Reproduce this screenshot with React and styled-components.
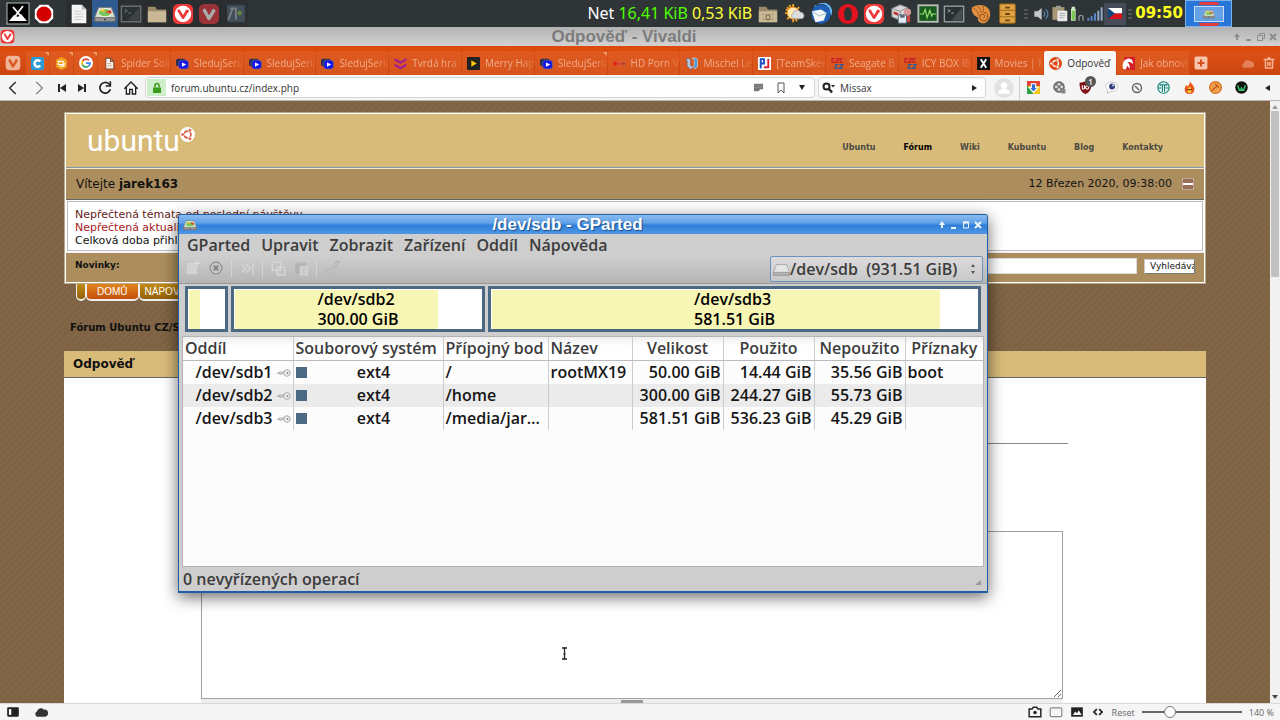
import React from "react";
import styled, { createGlobalStyle, css } from "styled-components";

const ui = `"Open Sans", "Noto Sans", sans-serif`;
const web = `"DejaVu Sans", Verdana, sans-serif`;
const title = `"Liberation Sans", Arial, sans-serif`;

const GlobalStyle = createGlobalStyle`
  *, *::before, *::after { box-sizing: border-box; }
  body { margin: 0; font-family: ${ui}; color: #111; overflow: hidden; }
  button, input, select, textarea { font: inherit; color: inherit; margin: 0; }
  button { border: 0; padding: 0; background: none; }
  a { color: inherit; text-decoration: none; }
  svg { display: block; flex: none; }
`;

/* ---------- icons ---------- */

const Svg = ({ s = 24, w, h, vb = "0 0 24 24", children, ...rest }) => (
  <svg width={w || s} height={h || s} viewBox={vb} fill="none" aria-hidden="true" {...rest}>
    {children}
  </svg>
);

const XIcon = () => (
  <Svg>
    <rect x="1" y="1" width="22" height="21" fill="#000" stroke="#bbb" />
    <path d="M7 5l11 13M17 4L7 17" stroke="#fff" strokeWidth="1.800" />
    <path d="M3 19l5-6 4 2 3-3 6 7z" fill="#fff" />
  </Svg>
);
const StopIcon = () => (
  <Svg s={20}>
    <path d="M7 1h10l6 6v10l-6 6H7l-6-6V7z" fill="#fff" />
    <circle cx="12" cy="12" r="9" fill="#d40000" />
  </Svg>
);
const DocIcon = ({ s = 22 }) => (
  <Svg s={s}>
    <path d="M4 2h11l5 5v15H4z" fill="#f4f4f4" />
    <path d="M15 2l5 5h-5z" fill="#bbb" />
    <path d="M7 9h8M7 12h10M7 15h10M7 18h8" stroke="#ccc" />
  </Svg>
);
const DiskIcon = ({ s = 22, plain }) => (
  <Svg s={s}>
    <path d="M5 5h14l4 10v5H1v-5z" fill={plain ? "#e4e4e4" : "#d8dcd2"} stroke={plain ? "#999" : "#777"} />
    <path d="M1 16h22v4H1z" fill={plain ? "#b5b5b5" : "#999"} stroke={plain ? "#8c8c8c" : "#666"} />
    {!plain && (
      <>
        <ellipse cx="12" cy="10.500" rx="7.500" ry="4.500" fill="#7bc85a" stroke="#fff" />
        <path d="M12 10l6-2.500a8 5 0 0 1 1 4z" fill="#e33" />
        <path d="M12 10l-6-2a8 4 0 0 1 5-2z" fill="#f2c94c" />
        <circle cx="12" cy="18" r="1" fill="#333" />
      </>
    )}
  </Svg>
);
const TermIcon = () => (
  <Svg s={22}>
    <rect x="1.500" y="3.500" width="21" height="17" fill="#2b3033" stroke="#979d9f" strokeWidth="1.500" />
    <path d="M5 7l3 1.500L5 10M9 11h3" stroke="#a9b0b2" />
    <path d="M21 5L9 19h12z" fill="#474e51" />
  </Svg>
);
const FolderIcon = ({ dots }) => (
  <Svg s={22}>
    <path d="M2 4h8l2 3h10v14H2z" fill="#9c8a6c" />
    <path d="M2 9h20v12H2z" fill="#c9b795" />
    {dots && <path d="M7 12v1m0 4v1m10-6v1m0 4v1M10 13v5h4v-5z" stroke="#6a5a40" />}
  </Svg>
);
const VivaldiIcon = ({ s = 22, bg = "#ef3939", fg = "#fff", v = "#ef3939" }) => (
  <Svg s={s}>
    <rect x="1" y="1" width="22" height="22" rx="6" fill={bg} />
    <circle cx="12" cy="12" r="9" fill={fg} />
    <path d="M7.500 8.500L12 16l4-6.500" stroke={v} strokeWidth="3" strokeLinecap="round" strokeLinejoin="round" />
    <circle cx="16.500" cy="9" r="1.800" fill={v} />
  </Svg>
);
const VMark = ({ s, bg, v }) => (
  <Svg s={s}>
    <rect x="1" y="1" width="22" height="22" rx="6" fill={bg} />
    <path d="M7 8l5 9 4.500-7.500" stroke={v} strokeWidth="3.600" strokeLinecap="round" strokeLinejoin="round" />
    <circle cx="17" cy="8.500" r="2" fill={v} />
  </Svg>
);
const ToolsIcon = () => (
  <Svg s={22}>
    <rect x="3" y="2" width="20" height="19" fill="#4f6170" stroke="#33383b" />
    <path d="M2 4v18" stroke="#222" strokeWidth="2" />
    <path d="M5 18l4-11M13 18V7M7 6h7" stroke="#a9b0b2" strokeWidth="2" />
    <circle cx="17" cy="11" r="2.500" fill="#84c042" />
  </Svg>
);
const WeatherIcon = () => (
  <Svg s={22}>
    <g stroke="#f4a320" strokeWidth="2">
      <path d="M10 1v20M1 11h18M3.500 4.500l13 13M16.500 4.500l-13 13M6 2l8 18M2 7l16 8" />
    </g>
    <circle cx="10" cy="11" r="6.500" fill="#ffe9b0" stroke="#f09418" />
    <path d="M10 17a3.500 3.500 0 0 1 0-6 4.500 4.500 0 0 1 8-1 3.800 3.800 0 0 1 2 7z" fill="#dedede" stroke="#aaa" />
  </Svg>
);
const BirdIcon = () => (
  <Svg s={22}>
    <circle cx="12" cy="12" r="10.500" fill="#1f5fb8" />
    <path d="M5 3a11 11 0 0 1 16 3l2 8a9 9 0 0 0-18-9z" fill="#63b4f5" />
    <path d="M2 9l10-2 6 4-3 8-9 2z" fill="#f4f6f8" />
    <path d="M2 9l8 5 8-3" stroke="#9bb" />
  </Svg>
);
const OperaIcon = () => (
  <Svg s={22}>
    <path fillRule="evenodd" d="M12 1a11 11 0 1 0 0 22 11 11 0 0 0 0-22zm0 3.500c2.800 0 4.300 3.400 4.300 7.500s-1.500 7.500-4.300 7.500S7.700 16.100 7.700 12 9.200 4.500 12 4.500z" fill="#e3121f" />
  </Svg>
);
const PackageIcon = () => (
  <Svg s={22}>
    <path d="M2 6l9-4 8 3v9l-8 5-9-4z" fill="#d8d8d8" stroke="#888" />
    <path d="M2 6l9 3 8-4M11 9v10" stroke="#888" />
    <path d="M4 9l5 2v3l-5-2z" fill="#b33" />
    <circle cx="19" cy="10" r="4" fill="#d99" />
    <path d="M15 14h7v7h-7z" fill="#c44" />
    <path d="M9 13h9v9H9z" fill="#e4ebf4" stroke="#567" />
    <path d="M11 13h5v3h-5z" fill="#567" />
  </Svg>
);
const MonitorIcon = () => (
  <Svg s={22}>
    <rect x="1.500" y="2.500" width="21" height="18" fill="#1d5a20" stroke="#b9c0ba" strokeWidth="2" />
    <path d="M3 12h4l2-5 2 9 3-8 2 6 1-2h4" stroke="#8fe26f" strokeWidth="1.300" />
  </Svg>
);
const ShellIcon = () => (
  <Svg s={22}>
    <path d="M2 5c6-5 20-4 20 7 0 7-5 11-9 10-4-1-5-4-4-6C5 15 1 10 2 5z" fill="#e09040" />
    <path d="M3 5c4 2 6 5 7 9M8 3c3 2 4 5 4 8M14 3c1 2 1 4 0 7" stroke="#a85a1c" />
    <path d="M14.500 10.500a4.500 4.500 0 1 1-4 5c0-2 2-3.500 4-3s2 4 0 4" stroke="#8d4510" />
  </Svg>
);
const CabinetIcon = () => (
  <Svg s={22}>
    <rect x="4" y="1" width="17" height="21" rx="1" fill="#dfa243" stroke="#9b6518" />
    <path d="M4 8h17M4 15h17" stroke="#9b6518" />
    <path d="M10 5h5M10 12h5M10 19h5" stroke="#6b4310" strokeWidth="2" />
  </Svg>
);
const DotsIcon = () => (
  <Svg w={8} h={14} vb="0 0 8 14">
    <path d="M2 3h4M2 7h4M2 11h4" stroke="#777" />
  </Svg>
);
const VolumeIcon = () => (
  <Svg s={16}>
    <path d="M2 8h5l6-5v18l-6-5H2z" fill="#c4c7c8" />
    <path d="M16 8a6 6 0 0 1 0 8M19 5a9 9 0 0 1 0 14" stroke="#5581a8" strokeWidth="2" />
  </Svg>
);
const ClipIcon = ({ s = 17, board = "#a99774", paper = "#e8e8e8", line = "#999" }) => (
  <Svg s={s}>
    <path d="M2 3h17v18H2z" fill={board} />
    <path d="M7 1h7v4H7z" fill={line} />
    <path d="M9 8h14v15H9z" fill={paper} />
    <path d="M12 12h8M12 15h8M12 18h6" stroke={line} />
  </Svg>
);
const BatteryIcon = () => (
  <Svg s={16}>
    <path d="M4 1h5v3H4zM3 4h7v18H3z" fill="#cfe8c4" />
    <path d="M4 7h5v14H4z" fill="#7dc653" />
    <path d="M15 22v-5a3 3 0 0 1 6 0v5" stroke="#8c9193" strokeWidth="2" />
  </Svg>
);
const SignalIcon = () => (
  <Svg s={16}>
    <path d="M2 18v4M7 15v7M12 11v11" stroke="#5a86c8" strokeWidth="3" />
    <path d="M17 7v15M22 2v20" stroke="#8fa9cc" strokeWidth="3" />
  </Svg>
);
const FlagIcon = () => (
  <Svg w={14} h={11} vb="0 0 14 11">
    <path d="M0 0h14v5.500H0z" fill="#fff" />
    <path d="M0 5.500h14V11H0z" fill="#d7141a" />
    <path d="M0 0l7 5.500L0 11z" fill="#11457e" />
  </Svg>
);

/* favicons */
const CIcon = () => (
  <Svg s={13}>
    <rect width="24" height="24" rx="3" fill="#2d9bd6" />
    <path d="M17 8a6 6 0 1 0 0 8" stroke="#fff" strokeWidth="4.500" />
  </Svg>
);
const HexIcon = () => (
  <Svg s={13}>
    <path d="M12 0l10 5v14l-10 5L2 19V5z" fill="#f0a01c" />
    <path d="M6 8h9v6H6zM8 17h8l2-6" stroke="#fff" strokeWidth="2" />
  </Svg>
);
const GIcon = () => (
  <Svg s={14}>
    <circle cx="12" cy="12" r="12" fill="#fff" />
    <path d="M17 7.500A7 7 0 0 0 6 8.500" stroke="#ea4335" strokeWidth="3" />
    <path d="M6 8.500a7 7 0 0 0 0 7" stroke="#fbbc05" strokeWidth="3" />
    <path d="M6 15.500a7 7 0 0 0 10.500 1.800" stroke="#34a853" strokeWidth="3" />
    <path d="M16.500 17.300A7 7 0 0 0 19 12h-7" stroke="#4285f4" strokeWidth="3" />
  </Svg>
);
const PageIcon = () => (
  <Svg s={13}>
    <path d="M5 2h9l6 6v14H5z" fill="#f5efe8" stroke="#8a4a28" strokeWidth="2" />
    <path d="M14 2v6h6" stroke="#8a4a28" strokeWidth="2" />
    <path d="M8 12h7M8 16h9" stroke="#c9a48c" strokeWidth="1.500" />
  </Svg>
);
const SeriesIcon = () => (
  <Svg s={13}>
    <rect x="0" y="3" width="18" height="14" rx="4" fill="#292d55" />
    <rect x="5" y="6" width="18" height="16" rx="5" fill="#1515e8" stroke="#777" />
    <path d="M11 10l8 4-8 4z" fill="#fff" />
  </Svg>
);
const ChevronsIcon = () => (
  <Svg s={13}>
    <path d="M1 2l11 6 11-6v5l-11 6L1 7zM1 12l11 6 11-6v5l-11 6-11-6z" fill="#a3208c" />
  </Svg>
);
const PlayIcon = () => (
  <Svg s={13}>
    <rect width="24" height="24" rx="2" fill="#222" />
    <path d="M8 6l10 6-10 6z" fill="#fc0" />
  </Svg>
);
const PillIcon = () => (
  <Svg s={13}>
    <rect x="8" y="9" width="16" height="6" rx="3" fill="#b33a28" stroke="#e87858" />
    <circle cx="4" cy="12" r="3.500" fill="#e01c1c" />
    <circle cx="13" cy="12" r="3" fill="#e04a2c" />
  </Svg>
);
const WaveIcon = () => (
  <Svg s={13}>
    <path d="M2 3h8v12l5 4-4 4-7-6V8z" fill="#b9c9dc" stroke="#4d5c90" />
    <path d="M13 2h8l2 3v13l-5 4-3-5 2-2V6z" fill="#4e98d4" stroke="#e8eef4" />
  </Svg>
);
const PjIcon = () => (
  <Svg s={13}>
    <rect width="24" height="24" fill="#fff" />
    <path d="M5 21V4h6v8H6" stroke="#1b4fc4" strokeWidth="3.500" />
    <path d="M19 3v16h-8" stroke="#d9202a" strokeWidth="3.500" />
  </Svg>
);
const CzcIcon = () => (
  <Svg s={13}>
    <path d="M7 3H2v7h5M9 3h5l-5 7h5M22 3h-5v7h5" stroke="#c7202c" strokeWidth="2.500" />
    <path d="M14 14H9v7h5M16 14h6l-6 7h6M5 20h2" stroke="#2a5c9c" strokeWidth="2.500" />
  </Svg>
);
const XFav = () => (
  <Svg s={13}>
    <rect width="24" height="24" fill="#111" />
    <path d="M7 4l10 16M17 4L7 20" stroke="#fff" strokeWidth="3.500" />
  </Svg>
);
const UbuntuIcon = ({ s = 13, bg = "#dd4814", fg = "#fff" }) => (
  <Svg s={s}>
    <circle cx="12" cy="12" r="12" fill={bg} />
    <circle cx="12" cy="12" r="5.500" stroke={fg} strokeWidth="2.600" />
    <g fill={fg} stroke={bg} strokeWidth="1.400">
      <circle cx="4.200" cy="12" r="2.900" />
      <circle cx="15.900" cy="5.200" r="2.900" />
      <circle cx="15.900" cy="18.800" r="2.900" />
    </g>
  </Svg>
);
const BirdFav = () => (
  <Svg s={13}>
    <path d="M4 0h20v24H4z" fill="#d4202a" />
    <path d="M2 22C-1 10 6 2 14 3c5 1 7 6 6 10-3-4-7-5-10-3 4 2 5 7 4 12l-4-6-3 7z" fill="#fff" />
  </Svg>
);

/* browser glyphs */
const Stroke = ({ s = 16, c = "#222", sw = 2, children }) => (
  <Svg s={s} stroke={c} strokeWidth={sw}>{children}</Svg>
);
const BackIcon = () => <Stroke><path d="M16 3l-9 9 9 9" /></Stroke>;
const FwdIcon = () => <Stroke c="#888"><path d="M8 3l9 9-9 9" /></Stroke>;
const RewindIcon = () => <Svg s={12}><path d="M4 4h4v16H4zM20 4v16L8 12z" fill="#222" /></Svg>;
const FfwdIcon = () => <Svg s={12}><path d="M16 4h4v16h-4zM4 4v16l12-8z" fill="#222" /></Svg>;
const ReloadIcon = () => (
  <Stroke sw={2.5}><path d="M20 14a8 8 0 1 1-2-8l2 2" /><path d="M20 2v7h-7" /></Stroke>
);
const HomeIcon = () => <Stroke><path d="M2 13L12 3l10 10M5 11v10h5v-7h4v7h5V11" /></Stroke>;
const LockIcon = () => (
  <Svg s={12}>
    <rect x="4" y="11" width="16" height="11" fill="#3a9b1c" />
    <path d="M8 11V7a4 4 0 0 1 8 0v4" stroke="#3a9b1c" strokeWidth="3" />
  </Svg>
);
const NoteIcon = () => <Svg s={11}><path d="M2 4h20v12h-6l-4 4H2z" fill="#777" /><path d="M2 8h20M2 12h20" stroke="#999" /></Svg>;
const BookmarkIcon = () => <Stroke s={12} c="#555"><path d="M6 2h12v20l-6-6-6 6z" /></Stroke>;
const CaretIcon = () => <Svg w={8} h={5} vb="0 0 8 5"><path d="M1 0h6L4 5z" fill="#222" /></Svg>;
const RightCaret = () => <Svg w={5} h={8} vb="0 0 5 8"><path d="M0 1v6l5-3z" fill="#222" /></Svg>;
const LeftCaret = () => <Svg w={5} h={8} vb="0 0 5 8"><path d="M5 1v6L0 4z" fill="#222" /></Svg>;
const SearchIcon = () => (
  <Svg w={14} h={12} vb="0 0 14 12">
    <circle cx="4.500" cy="4.500" r="3" stroke="#222" strokeWidth="2" />
    <path d="M7 7l3 3.500" stroke="#222" strokeWidth="2.500" />
    <path d="M9 3h4l-2 2.500z" fill="#222" />
  </Svg>
);
const AvatarIcon = () => (
  <Svg s={20}>
    <circle cx="12" cy="12" r="12" fill="#e2e2e2" />
    <circle cx="12" cy="9" r="4" fill="#fff" />
    <path d="M5 19c0-8 14-8 14 0z" fill="#fff" />
  </Svg>
);
const DownExt = () => (
  <Svg s={13}>
    <path d="M0 0h24v24H0z" fill="#f6c51c" />
    <path d="M0 0h24v9H0z" fill="#e34133" />
    <path d="M0 8l12 16H0z" fill="#2ca24c" />
    <path d="M8 5h8v7h4l-8 9-8-9h4z" fill="#2d6fd8" stroke="#fff" strokeWidth="2" />
  </Svg>
);
const ReelExt = () => (
  <Svg s={13}>
    <circle cx="11" cy="11" r="10" fill="#777" stroke="#444" />
    <g fill="#ddd"><circle cx="11" cy="6" r="2.500" /><circle cx="6" cy="11" r="2.500" /><circle cx="16" cy="11" r="2.500" /><circle cx="11" cy="16" r="2.500" /></g>
    <path d="M15 15h8v8h-8z" fill="#888" />
  </Svg>
);
const ShieldExt = () => (
  <Svg s={13}>
    <path d="M12 0c3 2 7 3 11 3 0 10-2 17-11 21C3 20 1 13 1 3c4 0 8-1 11-3z" fill="#800f12" />
    <path d="M6 8v5a2 2 0 0 0 4 0V8" stroke="#fff" strokeWidth="2" /><circle cx="15" cy="12" r="3" stroke="#fff" strokeWidth="2" />
  </Svg>
);
const EyeExt = () => (
  <Svg s={13}>
    <path d="M12 2c8 0 12 5 11 10-1 6-8 8-13 7l-6 4 1-6C-2 10 2 2 12 2z" fill="#fff" stroke="#bbb" strokeWidth="1.500" />
    <circle cx="13" cy="10" r="5.500" fill="#363e7c" /><circle cx="15" cy="8" r="2" fill="#cde" />
  </Svg>
);
const BlockExt = () => <Stroke s={12} c="#666" sw={3}><circle cx="12" cy="12" r="9" /><path d="M8 8l8 8" /></Stroke>;
const TExt = () => (
  <Svg s={13}><circle cx="12" cy="12" r="10.500" stroke="#148074" strokeWidth="2" fill="#e4f6f4" />
    <path d="M6 9V7h12v2M10 7v13M14 7v13M2 13h6M16 13h6" stroke="#148074" strokeWidth="2" /></Svg>
);
const FireExt = () => (
  <Svg s={13}><path d="M13 0c1 5 8 8 8 15 0 6-4 9-9 9s-9-3-9-9c0-3 2-5 3-8l2 3c3-2 5-5 5-10z" fill="#ea5a1c" />
    <path d="M12 10c4 3 6 11 0 12-6-1-4-8 0-12z" fill="#ffc93c" /><path d="M7 16h10" stroke="#7a2a10" strokeWidth="2" /></Svg>
);
const BallExt = () => (
  <Svg s={13}><circle cx="12" cy="12" r="11" fill="#f0a04a" stroke="#d4681c" strokeWidth="2" />
    <path d="M5 18L16 8M11 5l7 7" stroke="#c3501c" strokeWidth="2" /></Svg>
);
const WExt = () => (
  <Svg s={13}><circle cx="12" cy="12" r="11.500" fill="#111" />
    <path d="M5 8l3 9h3l1-5 1 5h3l3-9" stroke="#35d07a" strokeWidth="2.500" /></Svg>
);
const CloudIcon = ({ c = "#f0a080", s = 13 }) => (
  <Svg s={s}><path d="M5 20a5 5 0 0 1 0-9 7 7 0 0 1 12-3 6 6 0 0 1 2 12z" fill={c} /></Svg>
);
const TrashIcon = () => <Stroke s={12} c="#f6b595" sw={3}><path d="M1 5h22M9 2h6M5 6v16h14V6M10 10v8M14 10v8" /></Stroke>;
const PlusTab = () => (
  <Svg s={14}><rect x="1" y="1" width="22" height="22" rx="3" fill="#f6c5ac" /><path d="M12 6v12M6 12h12" stroke="#d4501a" strokeWidth="3.500" /></Svg>
);

const WinUp = () => <Svg s={8} vb="0 0 8 8"><path d="M4 0l3 4H5v3H3V4H1z" fill="currentColor" /></Svg>;
const WinMin = () => <Svg s={8} vb="0 0 8 8"><path d="M1 6h5v2H1z" fill="currentColor" /></Svg>;
const WinMax = () => <Svg s={8} vb="0 0 8 8"><path d="M1.500 1v6h5V1z" stroke="currentColor" /><path d="M1 1.500h6" stroke="currentColor" strokeWidth="2" /></Svg>;
const WinRestore = () => <Svg s={8} vb="0 0 8 8"><path d="M.500 2.500h5v5h-5zM2.500 2V.500h5v5H6" stroke="currentColor" /></Svg>;
const WinClose = () => <Svg s={8} vb="0 0 8 8"><path d="M1 1l6 6M7 1L1 7" stroke="currentColor" strokeWidth="2" /></Svg>;

const KeyIcon = () => (
  <Svg w={14} h={8} vb="0 0 14 8">
    <circle cx="10" cy="4" r="3.300" stroke="#aaa" fill="#eee" /><circle cx="10.500" cy="4" r="1" fill="#888" />
    <path d="M7 3H2L.500 4.500H3v1h1v-1h3" stroke="#aaa" />
  </Svg>
);

/* ---------- desktop panel ---------- */

const Desktop = styled.div`
  position: relative;
  display: flex;
  flex-direction: column;
  height: 100vh;
`;
const Panel = styled.header`
  display: flex;
  align-items: center;
  flex: none;
  height: 27px;
  background: #2f3437;
  color: #fff;
`;
const Launcher = styled.button`
  display: grid;
  place-items: center;
  width: 26px;
  height: 27px;
  background: ${(p) => (p.$active ? "#2f5b91" : p.$flat ? "none" : "#2a2d2f")};
  opacity: ${(p) => (p.$dim ? 0.6 : 1)};
`;
const Launchers = styled.div`
  display: flex;
  padding-left: 5px;
  & > :nth-child(2) { margin-right: 9px; }
`;
const Tray = styled.div`
  display: flex;
  align-items: center;
  margin-left: auto;
`;
const TrayIcons = styled.div`
  display: flex;
  justify-content: space-between;
  width: 265px;
`;
const Net = styled.p`
  display: flex;
  gap: 4px;
  margin: 0 3px 0 0;
  font: 16px/27px "Noto Sans", sans-serif;
`;
const Rate = styled.span`
  color: ${(p) => p.$color};
`;
const SmallSlot = styled.span`
  display: grid;
  place-items: center;
  width: ${(p) => p.$w || 18}px;
  height: 22px;
  background: ${(p) => p.$bg || "none"};
`;
const Clock = styled.time`
  margin: 0 2px 0 1px;
  font: bold 15px/27px ${web};
  color: #ffff1a;
`;
const Pager = styled.button`
  display: grid;
  place-items: center;
  width: 47px;
  height: 27px;
  margin-right: 48px;
  background: #2877d8;
  border: 1px solid #7fb2ea;
`;
const PagerWindow = styled.span`
  display: grid;
  place-items: center;
  width: 30px;
  height: 16px;
  background: radial-gradient(ellipse, #6fa8e8, #5f9de2);
  border: 1px solid #c6ddf6;
`;
const PagerCap = styled.span`
  width: 20px;
  height: 3px;
  border-radius: ${(p) => (p.$low ? "0 0 9px 9px" : "9px 9px 0 0")};
  background: #e43c3c;
`;

/* ---------- browser ---------- */

const TitleBar = styled.div`
  display: flex;
  align-items: center;
  flex: none;
  height: 19px;
  padding: 0 3px 0 0;
  background: linear-gradient(#b2b2b2, #d2d2d2);
  color: #8d8d8d;
`;
const WinTitle = styled.h1`
  flex: 1;
  margin: 0;
  font: bold 17px/19px ${title};
  text-align: center;
  color: ${(p) => p.$color};
  text-shadow: ${(p) => p.$shadow || "none"};
`;
const WinButtons = styled.div`
  display: flex;
  gap: 4px;
`;
const WinButton = styled.button`
  width: 8px;
  height: 8px;
`;
const TabStrip = styled.nav`
  display: flex;
  align-items: flex-end;
  flex: none;
  height: 29px;
  padding-top: 5px;
  background: linear-gradient(#dd4b0c 0 5px, #dc5015 6px, #cb4510);
`;
const StripButton = styled.button`
  display: grid;
  place-items: center;
  width: ${(p) => p.$w}px;
  height: 24px;
`;
const Tab = styled.button`
  position: relative;
  display: flex;
  align-items: center;
  gap: 5px;
  flex: ${(p) => (p.$pinned ? "0 0 23px" : "1 1 0")};
  min-width: 0;
  height: 24px;
  margin-right: 1px;
  padding-left: 5px;
  overflow: hidden;
  background: ${(p) => (p.$active ? "#f6f6f6" : "rgba(224, 96, 38, 0.6)")};
  border-radius: 2px 2px 0 0;
  color: ${(p) => (p.$active ? "#333" : "#f2ac8c")};
  ${(p) => p.$mark && css`
    &::after {
      content: "";
      position: absolute;
      top: 1px;
      right: 0;
      border: 2px solid #f09a72;
      border-left-color: transparent;
      border-bottom-color: transparent;
    }
  `}
`;
const TabLabel = styled.span`
  flex: 1;
  overflow: hidden;
  font-size: 10px;
  line-height: 24px;
  text-align: left;
  white-space: nowrap;
  mask-image: linear-gradient(90deg, #000 70%, rgba(0, 0, 0, 0.2));
  ${(p) => p.$active && css`mask-image: none;`}
`;
const StripEnd = styled.div`
  display: flex;
  justify-content: flex-end;
  flex: none;
  width: 90px;
  & > :first-child { margin-right: auto; }
`;
const AddressBar = styled.div`
  display: flex;
  align-items: center;
  flex: none;
  height: 26px;
  background: #f5f5f5;
  border-bottom: 1px solid #bdb5ab;
`;
const BarButton = styled.button`
  display: grid;
  place-items: center;
  width: ${(p) => p.$w || 26}px;
  height: 24px;
  position: relative;
`;
const Field = styled.label`
  display: flex;
  align-items: center;
  flex: ${(p) => (p.$grow ? "1" : "0 0 168px")};
  min-width: 0;
  height: 21px;
  margin: 0 2px 0 1px;
  padding: 0 8px 0 ${(p) => (p.$grow ? 1 : 3)}px;
  background: #fff;
  border: 1px solid #d4d4d4;
  border-radius: 4px;
`;
const Secure = styled.span`
  display: grid;
  place-items: center;
  width: 19px;
  height: 17px;
  margin-right: 5px;
  background: #cdeecb;
`;
const FieldInput = styled.input`
  flex: 1;
  min-width: 0;
  padding: 0 0 0 ${(p) => p.$pad || 0}px;
  border: 0;
  background: none;
  outline: 0;
  font-size: 10px;
  line-height: 16px;
  color: #333;
`;
const FieldIcons = styled.span`
  display: flex;
  align-items: center;
  gap: 11px;
`;
const Avatar = styled.button`
  margin: 0 5px 0 6px;
`;
const Extensions = styled.div`
  display: flex;
  border-left: 1px solid #ccc;
`;
const Badge = styled.span`
  position: absolute;
  top: 0;
  right: 2px;
  width: 11px;
  height: 11px;
  border-radius: 6px;
  background: #555;
  color: #fff;
  font-size: 8px;
  font-weight: 600;
  line-height: 11px;
`;

/* ---------- forum page ---------- */

const Viewport = styled.div`
  display: flex;
  flex: 1;
  min-height: 0;
`;
const Page = styled.main`
  flex: 1;
  min-width: 0;
  padding: 11px 5% 0;
  overflow: hidden;
  display: flex;
  flex-direction: column;
  font-family: ${web};
  background: repeating-linear-gradient(135deg, #7d6243 0 2px, #826647 3px 5px);
`;
const Scrollbar = styled.div`
  display: flex;
  flex-direction: column;
  align-items: center;
  flex: none;
  width: 10px;
  padding: 4px 0;
  background: #f1f1f1;
`;
const Thumb = styled.div`
  width: 8px;
  height: 28%;
  margin: 2px 0 auto;
  background: #c1c1c1;
`;
const Arrow = styled.span`
  border: 3px solid transparent;
  ${(p) => (p.$up
    ? css`border-top: 0; border-bottom: 4px solid #999;`
    : css`border-bottom: 0; border-top: 4px solid #444;`)}
`;
const HeaderBox = styled.section`
  border: 2px solid #fff;
  outline: 1px solid #b9a98e;
  outline-offset: -1px;
`;
const Brand = styled.div`
  display: flex;
  align-items: flex-end;
  justify-content: space-between;
  height: 53px;
  padding: 0 41px 12px 21px;
  background: #d8bb79;
`;
const Logo = styled.a`
  display: flex;
  align-items: flex-start;
  font: 30px/28px Roboto, sans-serif;
  color: #fff;
`;
const SiteNav = styled.nav`
  display: flex;
  gap: 28px;
  font: bold 8px/14px ${web};
  color: #4c4a44;
`;
const SiteLink = styled.a`
  color: ${(p) => (p.$current ? "#000" : "inherit")};
`;
const Welcome = styled.div`
  display: flex;
  align-items: center;
  height: 33px;
  padding: 0 10px;
  border-top: 1px solid #8097b4;
  border-bottom: 1px solid #666;
  background: #ac8e5e;
  box-shadow: inset 0 1px 0 #f0e6d0;
  font-size: 12px;
`;
const DateText = styled.span`
  margin-left: auto;
  padding-right: 10px;
  font-size: 11px;
`;
const Collapse = styled.button`
  width: 12px;
  height: 12px;
  border: 1px solid #c9a78e;
  background: linear-gradient(#96705c 0 4px, #fff 4px 6px, #96705c 6px);
`;
const Unread = styled.div`
  padding: 6px 7px;
  height: 52px;
  border: 2px solid #fff;
  outline: 1px solid #bbb;
  outline-offset: -2px;
  background: #fff;
  font-size: 11px;
  line-height: 13px;
`;
const Line = styled.a`
  display: block;
  color: ${(p) => p.$color};
`;
const NewsRow = styled.div`
  display: flex;
  align-items: center;
  justify-content: flex-end;
  gap: 7px;
  height: 30px;
  padding: 0 9px 3px;
  border-top: 1px solid #eee;
  background: #ac8e5e;
  font-size: 9px;
`;
const NewsTitle = styled.strong`
  margin: 0 auto 3px 0;
`;
const SiteSearch = styled.input`
  width: 190px;
  height: 16px;
  border: 1px solid #ddd;
  background: #fff;
`;
const SearchButton = styled.button`
  width: 51px;
  height: 15px;
  padding-left: 5px;
  overflow: hidden;
  border: 1px outset #ccc;
  background: #fff;
  white-space: nowrap;
  text-align: left;
  font-size: 9px;
  line-height: 12px;
`;
const MenuTabs = styled.nav`
  display: flex;
  align-self: flex-start;
  margin-left: 12px;
  font: 10px/16px ${title};
  color: #fff;
`;
const MenuTab = styled.a`
  height: 17px;
  padding: 0 ${(p) => p.$pad}px;
  background: ${(p) => (p.$current ? "linear-gradient(#e0851c, #c4500c)" : "linear-gradient(#c08a10, #93600c)")};
  border: solid #eee;
  border-width: 0 1px 2px 1px;
  border-radius: 0 0 5px 5px;
`;
const Crumbs = styled.div`
  padding: 20px 6px 0;
  font-size: 10px;
  font-weight: bold;
  line-height: 14px;
`;
const PostTitle = styled.h2`
  margin: 16px 0 0;
  padding: 0 9px;
  border-bottom: 1px solid #666;
  background: #d8bb79;
  font-size: 12px;
  line-height: 26px;
`;
const PostForm = styled.form`
  display: flex;
  flex-direction: column;
  flex: 1;
  min-height: 0;
  padding: 65px 138px 0 137px;
  background: #fff;
`;
const Rule = styled.hr`
  width: 100%;
  margin: 0 0 87px;
  border: 0;
  border-top: 1px solid #888;
`;
const Message = styled.textarea`
  flex: 1;
  margin-right: 5px;
  border: 1px solid #a0a0a0;
  outline: 0;
  background: #fff;
`;
const Grip = styled.div`
  height: 4px;
  margin-right: 5px;
  background: linear-gradient(#999, #999) center / 22px 3px no-repeat #eee;
`;
const StatusBar = styled.footer`
  display: flex;
  align-items: center;
  gap: 7px;
  flex: none;
  height: 17px;
  padding: 0 6px;
  background: #f5f5f5;
  border-top: 1px solid #d8d8d8;
  font-size: 9px;
  color: #666;
`;
const Push = styled.span`
  margin-left: auto;
`;
const ZoomRange = styled.input`
  appearance: none;
  width: 100px;
  height: 12px;
  background: linear-gradient(#666, #666) center / 100% 2px no-repeat;
  &::-webkit-slider-thumb {
    appearance: none;
    width: 12px;
    height: 12px;
    border: 1px solid #777;
    border-radius: 50%;
    background: #fff;
  }
`;

/* ---------- GParted window ---------- */

const AppWindow = styled.section`
  position: absolute;
  left: 178px;
  top: 214px;
  width: 810px;
  border: 1px solid #1f5fa8;
  border-bottom-width: 2px;
  border-radius: 3px 3px 0 0;
  background: #cecece;
  box-shadow: 0 4px 16px rgba(0, 0, 0, 0.6);
  font-weight: 650;
  font-size: 16px;
  color: #3c3c3c;
`;
const AppTitle = styled.div`
  display: flex;
  align-items: center;
  height: 19px;
  padding: 0 5px 0 4px;
  border-radius: 2px 2px 0 0;
  background: linear-gradient(#8abaf0, #62a3e8 40%, #2f7fd8 55%, #4f97e4);
  color: #eef4fc;
`;
const MenuBar = styled.nav`
  display: flex;
  gap: 11px;
  height: 22px;
  padding: 0 8px;
  line-height: 22px;
`;
const MenuItem = styled.button`
  line-height: 22px;
`;
const Toolbar = styled.div`
  display: flex;
  align-items: flex-start;
  justify-content: space-between;
  height: 28px;
  padding: 0 4px 0 3px;
  border-bottom: 1px solid #999;
  background: linear-gradient(#cecece, #b5b5b5);
`;
const Tools = styled.div`
  display: flex;
  align-items: center;
  gap: 1px;
`;
const ToolButton = styled.button`
  display: grid;
  place-items: center;
  width: 22px;
  height: 24px;
`;
const Divider = styled.span`
  width: 1px;
  height: 18px;
  margin: 0 3px;
  background: #d4d4d4;
`;
const DeviceBox = styled.label`
  display: flex;
  align-items: center;
  width: 213px;
  height: 26px;
  padding: 0 6px 0 2px;
  border: 1px solid #6b93bd;
  border-radius: 2px;
  background: linear-gradient(#dcdcdc, #c8c8c8);
`;
const DeviceSelect = styled.select`
  appearance: none;
  flex: 1;
  min-width: 0;
  padding: 0;
  border: 0;
  background: none;
  outline: 0;
`;
const DiskMap = styled.div`
  display: grid;
  grid-template-columns: 43fr 254fr 493fr;
  gap: 3px;
  height: 52px;
  padding: 2px 6px 4px;
`;
const Partition = styled.div`
  display: grid;
  place-content: center;
  border: 3px solid #4b6983;
  background: linear-gradient(#f7f6b4, #f7f6b4) 1px 1px no-repeat #fff;
  line-height: 20px;
  color: #000;
`;
const List = styled.div`
  min-height: 231px;
  margin: 0 3px;
  border: 1px solid #b4b4b4;
  background: #fcfcfc;
`;
const Table = styled.table`
  width: 100%;
  table-layout: fixed;
  border-collapse: collapse;
  color: #161616;
`;
const HeadCell = styled.th`
  height: 23px;
  padding: 0 2px;
  border-right: 1px solid #ccc;
  border-bottom: 1px solid #bbb;
  background: linear-gradient(#eee, #fff 40%);
  font-weight: inherit;
  line-height: 23px;
  color: #3c3c3c;
  white-space: nowrap;
  text-align: ${(p) => p.$align || "left"};
  &:last-child { border-right: 0; }
`;
const Row = styled.tr`
  background: ${(p) => (p.$alt ? "#ebebeb" : "#fcfcfc")};
`;
const Cell = styled.td`
  height: 23px;
  padding: 0 2px;
  border-right: 1px solid #ccc;
  line-height: 23px;
  white-space: nowrap;
  overflow: hidden;
  text-overflow: ellipsis;
  text-align: ${(p) => p.$align || "left"};
  &:last-child { border-right: 0; }
`;
const Device = styled.span`
  display: flex;
  align-items: center;
  justify-content: flex-end;
  gap: 4px;
`;
const FileSystem = styled.span`
  display: flex;
  align-items: center;
`;
const Swatch = styled.span`
  width: 11px;
  height: 11px;
  background: #4b6983;
`;
const FsName = styled.span`
  flex: 1;
  text-align: center;
`;
const Pending = styled.div`
  display: flex;
  align-items: flex-end;
  justify-content: space-between;
  height: 24px;
  padding: 0 6px 0 4px;
  line-height: 24px;
`;
const Cursor = styled.svg`
  position: absolute;
  left: 560px;
  top: 647px;
`;

/* ---------- data ---------- */

const tabs = [
  ["Spider Soli", PageIcon],
  ["SledujSeria", SeriesIcon],
  ["SledujSeria", SeriesIcon],
  ["SledujSeria", SeriesIcon],
  ["Tvrdá hra 3", ChevronsIcon],
  ["Merry Hap", PlayIcon],
  ["SledujSeria", SeriesIcon, true],
  ["HD Porn V", PillIcon],
  ["Mischel Le", WaveIcon],
  ["[TeamSkee", PjIcon],
  ["Seagate B", CzcIcon],
  ["ICY BOX IB", CzcIcon],
  ["Movies | M", XFav],
  ["Odpověď", UbuntuIcon],
  ["Jak obnovi", BirdFav],
];

const partitions = [
  ["/dev/sdb1", "/", "rootMX19", "50.00 GiB", "14.44 GiB", "35.56 GiB", "boot"],
  ["/dev/sdb2", "/home", "", "300.00 GiB", "244.27 GiB", "55.73 GiB", ""],
  ["/dev/sdb3", "/media/jar…", "", "581.51 GiB", "536.23 GiB", "45.29 GiB", ""],
];

const extensions = [DownExt, ReelExt, ShieldExt, EyeExt, BlockExt, TExt, FireExt, BallExt, WExt, LeftCaret];

const WindowButtons = ({ restore }) => (
  <WinButtons>
    <WinButton aria-label="Vždy navrchu"><WinUp /></WinButton>
    <WinButton aria-label="Minimalizovat"><WinMin /></WinButton>
    <WinButton aria-label="Maximalizovat">{restore ? <WinRestore /> : <WinMax />}</WinButton>
    <WinButton aria-label="Zavřít"><WinClose /></WinButton>
  </WinButtons>
);

const DesktopPanel = () => (
  <Panel>
    <Launchers>
      <Launcher $flat aria-label="Menu"><XIcon /></Launcher>
      <Launcher $flat aria-label="Stop"><StopIcon /></Launcher>
      <Launcher aria-label="Dokument"><DocIcon /></Launcher>
      <Launcher $active aria-label="GParted"><DiskIcon /></Launcher>
      <Launcher $dim aria-label="Terminál"><TermIcon /></Launcher>
      <Launcher aria-label="Soubory"><FolderIcon /></Launcher>
      <Launcher aria-label="Vivaldi"><VivaldiIcon /></Launcher>
      <Launcher aria-label="Vivaldi, druhé okno"><VMark s={22} bg="#9b3238" v="#aaa" /></Launcher>
      <Launcher $dim aria-label="Nástroje"><ToolsIcon /></Launcher>
    </Launchers>
    <Tray>
      <Net><Rate $color="#fff">Net</Rate><Rate $color="#4dff00">16,41 KiB</Rate><Rate $color="#ffff33">0,53 KiB</Rate></Net>
      <TrayIcons>
        <Launcher $flat aria-label="Domů"><FolderIcon dots /></Launcher>
        <Launcher $flat aria-label="Počasí"><WeatherIcon /></Launcher>
        <Launcher $flat aria-label="Pošta"><BirdIcon /></Launcher>
        <Launcher $flat aria-label="Opera"><OperaIcon /></Launcher>
        <Launcher $flat aria-label="Prohlížeč"><VivaldiIcon /></Launcher>
        <Launcher $flat aria-label="Balíčky"><PackageIcon /></Launcher>
        <Launcher $flat aria-label="Vytížení"><MonitorIcon /></Launcher>
        <Launcher $flat aria-label="Konzole"><TermIcon /></Launcher>
        <Launcher $flat aria-label="Nautilus"><ShellIcon /></Launcher>
        <Launcher $flat aria-label="Archiv"><CabinetIcon /></Launcher>
      </TrayIcons>
      <SmallSlot $w={12}><DotsIcon /></SmallSlot>
      <SmallSlot><VolumeIcon /></SmallSlot>
      <SmallSlot><ClipIcon /></SmallSlot>
      <SmallSlot><BatteryIcon /></SmallSlot>
      <SmallSlot><SignalIcon /></SmallSlot>
      <SmallSlot $w={22} $bg="#454c58"><FlagIcon /></SmallSlot>
      <SmallSlot $w={8}><DotsIcon /></SmallSlot>
      <Clock>09:50</Clock>
      <Pager aria-label="Plocha"><PagerCap /><PagerWindow><DiskIcon s={12} /></PagerWindow><PagerCap $low /></Pager>
    </Tray>
  </Panel>
);

const Browser = () => (
  <>
    <TitleBar>
      <VivaldiIcon s={15} />
      <WinTitle $color="#7c7c7c">Odpověď - Vivaldi</WinTitle>
      <WindowButtons restore />
    </TitleBar>
    <TabStrip>
      <StripButton $w={26} aria-label="Vivaldi"><VMark s={16} bg="#f0b396" v="#d9571f" /></StripButton>
      <Tab $pinned $mark aria-label="C"><CIcon /></Tab>
      <Tab $pinned $mark aria-label="Pošta"><HexIcon /></Tab>
      <Tab $pinned $mark aria-label="Google"><GIcon /></Tab>
      {tabs.map(([label, Icon, mark], i) => (
        <Tab key={i} $active={i === 13} $mark={mark}>
          <Icon />
          <TabLabel $active={i === 13}>{label}</TabLabel>
        </Tab>
      ))}
      <StripEnd>
        <StripButton $w={22} aria-label="Nový panel"><PlusTab /></StripButton>
        <StripButton $w={20} aria-label="Synchronizace"><CloudIcon c="#e57f58" /></StripButton>
        <StripButton $w={22} aria-label="Koš"><TrashIcon /></StripButton>
      </StripEnd>
    </TabStrip>
    <AddressBar>
      <BarButton aria-label="Zpět"><BackIcon /></BarButton>
      <BarButton aria-label="Vpřed"><FwdIcon /></BarButton>
      <BarButton $w={20} aria-label="Na začátek"><RewindIcon /></BarButton>
      <BarButton $w={20} aria-label="Na konec"><FfwdIcon /></BarButton>
      <BarButton aria-label="Obnovit"><ReloadIcon /></BarButton>
      <BarButton aria-label="Domovská stránka"><HomeIcon /></BarButton>
      <Field $grow>
        <Secure><LockIcon /></Secure>
        <FieldInput aria-label="Adresa" defaultValue="forum.ubuntu.cz/index.php" />
        <FieldIcons><NoteIcon /><BookmarkIcon /><CaretIcon /></FieldIcons>
      </Field>
      <Field>
        <SearchIcon />
        <FieldInput $pad={4} aria-label="Hledat" defaultValue="Missax" />
        <RightCaret />
      </Field>
      <Avatar aria-label="Profil"><AvatarIcon /></Avatar>
      <Extensions>
        {extensions.map((Icon, i) => (
          <BarButton key={i} aria-label={`Rozšíření ${i + 1}`}>
            <Icon />
            {i === 2 && <Badge>1</Badge>}
          </BarButton>
        ))}
      </Extensions>
    </AddressBar>
  </>
);

const ForumPage = () => (
  <Viewport>
    <Page>
      <HeaderBox>
        <Brand>
          <Logo href="#">ubuntu<UbuntuIcon s={15} bg="#fff" fg="#e0573c" /></Logo>
          <SiteNav>
            {["Ubuntu", "Fórum", "Wiki", "Kubuntu", "Blog", "Kontakty"].map((n) => (
              <SiteLink key={n} href="#" $current={n === "Fórum"}>{n}</SiteLink>
            ))}
          </SiteNav>
        </Brand>
        <Welcome>
          <span>Vítejte <strong>jarek163</strong></span>
          <DateText>12 Březen 2020, 09:38:00</DateText>
          <Collapse aria-label="Sbalit" />
        </Welcome>
        <Unread>
          <Line href="#" $color="#661a1a">Nepřečtená témata od poslední návštěvy</Line>
          <Line href="#" $color="#a52020">Nepřečtená aktualizovaná témata</Line>
          <Line as="span" $color="#111">Celková doba přihlášení</Line>
        </Unread>
        <NewsRow>
          <NewsTitle>Novinky:</NewsTitle>
          <SiteSearch aria-label="Hledat na fóru" />
          <SearchButton>Vyhledávání</SearchButton>
        </NewsRow>
      </HeaderBox>
      <MenuTabs>
        <MenuTab $pad={4} href="#" aria-label="Menu" />
        <MenuTab $pad={10} $current href="#">DOMŮ</MenuTab>
        <MenuTab $pad={5} href="#">NÁPOVĚDA</MenuTab>
      </MenuTabs>
      <Crumbs>Fórum Ubuntu CZ/SK</Crumbs>
      <PostTitle>Odpověď</PostTitle>
      <PostForm>
        <Rule />
        <Message aria-label="Zpráva" />
        <Grip />
      </PostForm>
    </Page>
    <Scrollbar><Arrow $up /><Thumb /><Arrow /></Scrollbar>
  </Viewport>
);

const BrowserStatus = () => (
  <StatusBar>
    <Svg s={14}><rect x="2" y="4" width="20" height="16" rx="2" fill="#222" /><path d="M5 7h4v10H5z" fill="#fff" /></Svg>
    <span /><CloudIcon s={14} c="#333" />
    <Push />
    <Svg s={14}><path d="M2 7h5l2-3h6l2 3h5v13H2z" stroke="#222" strokeWidth="2.500" /><circle cx="12" cy="13" r="3" fill="#222" /></Svg>
    <Svg s={14}><rect x="2" y="5" width="20" height="15" rx="2" stroke="#888" strokeWidth="2" /></Svg>
    <Svg s={14}><rect x="2" y="4" width="20" height="16" fill="#222" /><path d="M5 17l4-6 3 3 3-5 5 8z" fill="#f5f5f5" /></Svg>
    <Svg s={14}><path d="M10 7l-5 5 5 5M14 7l5 5-5 5" stroke="#222" strokeWidth="3" /></Svg>
    <button>Reset</button>
    <ZoomRange type="range" min="20" max="500" defaultValue="140" aria-label="Přiblížení" />
    <span>140 %</span>
  </StatusBar>
);

const GParted = () => (
  <AppWindow>
    <AppTitle>
      <DiskIcon s={14} />
      <WinTitle $color="#fff" $shadow="1px 1px 1px #1c4f8c">/dev/sdb - GParted</WinTitle>
      <WindowButtons />
    </AppTitle>
    <MenuBar>
      {["GParted", "Upravit", "Zobrazit", "Zařízení", "Oddíl", "Nápověda"].map((m) => (
        <MenuItem key={m}>{m}</MenuItem>
      ))}
    </MenuBar>
    <Toolbar>
      <Tools>
        <ToolButton aria-label="Nový"><Svg s={16}><path d="M2 3h12l5 7v12H2z" fill="#d2d2d2" stroke="#bbb" /><path d="M18 1v9M14 5h9" stroke="#dedede" strokeWidth="2" /></Svg></ToolButton>
        <ToolButton aria-label="Smazat"><Svg s={14}><circle cx="12" cy="12" r="10" fill="#c8c8c8" stroke="#8c8c8c" strokeWidth="2" /><path d="M8 8l8 8M16 8l-8 8" stroke="#808080" strokeWidth="3" /></Svg></ToolButton>
        <Divider />
        <ToolButton aria-label="Změnit velikost"><Svg s={15}><path d="M3 6l7 6-7 6M10 5l7 7-7 7M21 3v18" stroke="#d8d8d8" strokeWidth="2" /></Svg></ToolButton>
        <Divider />
        <ToolButton aria-label="Kopírovat"><Svg s={15}><path d="M2 2h13v13H2zM10 10h12v12H10z" fill="#c2c2c2" stroke="#dadada" strokeWidth="2" /></Svg></ToolButton>
        <ToolButton aria-label="Vložit"><ClipIcon s={15} board="#b2b2b2" paper="#d0d0d0" line="#bdbdbd" /></ToolButton>
        <Divider />
        <ToolButton aria-label="Použít"><Svg s={16}><path d="M1 14l3-3 5 5L19 2l4 1L10 22z" fill="#c4c4c4" stroke="#a8a8a8" /></Svg></ToolButton>
      </Tools>
      <DeviceBox>
        <DiskIcon s={17} plain />
        <DeviceSelect aria-label="Zařízení">
          <option>/dev/sdb{"\u00a0"} (931.51 GiB)</option>
        </DeviceSelect>
        <Svg w={6} h={10} vb="0 0 6 10"><path d="M1 3l2-3 2 3zM1 7l2 3 2-3z" fill="#555" /></Svg>
      </DeviceBox>
    </Toolbar>
    <DiskMap>
      <Partition style={{ backgroundSize: "30% 100%" }} />
      <Partition style={{ backgroundSize: "82% 100%" }}><span>/dev/sdb2</span><span>300.00 GiB</span></Partition>
      <Partition style={{ backgroundSize: "92% 100%" }}><span>/dev/sdb3</span><span>581.51 GiB</span></Partition>
    </DiskMap>
    <List>
      <Table>
        <colgroup>
          {[110, 150, 105, 84, 91, 91, 91].map((w, i) => <col key={i} width={w} />)}
          <col />
        </colgroup>
        <thead>
          <tr>
            <HeadCell>Oddíl</HeadCell>
            <HeadCell>Souborový systém</HeadCell>
            <HeadCell>Přípojný bod</HeadCell>
            <HeadCell>Název</HeadCell>
            <HeadCell $align="center">Velikost</HeadCell>
            <HeadCell $align="center">Použito</HeadCell>
            <HeadCell $align="center">Nepoužito</HeadCell>
            <HeadCell $align="center">Příznaky</HeadCell>
          </tr>
        </thead>
        <tbody>
          {partitions.map(([dev, mount, name, size, used, free, flags], i) => (
            <Row key={dev} $alt={i === 1}>
              <Cell><Device>{dev}<KeyIcon /></Device></Cell>
              <Cell><FileSystem><Swatch /><FsName>ext4</FsName></FileSystem></Cell>
              <Cell>{mount}</Cell>
              <Cell>{name}</Cell>
              <Cell $align="right">{size}</Cell>
              <Cell $align="right">{used}</Cell>
              <Cell $align="right">{free}</Cell>
              <Cell>{flags}</Cell>
            </Row>
          ))}
        </tbody>
      </Table>
    </List>
    <Pending>
      <span>0 nevyřízených operací</span>
      <Svg w={6} h={11} vb="0 0 6 11"><path d="M6 0v5H0z" fill="#999" /></Svg>
    </Pending>
  </AppWindow>
);

export default function App() {
  return (
    <Desktop>
      <GlobalStyle />
      <DesktopPanel />
      <Browser />
      <ForumPage />
      <BrowserStatus />
      <GParted />
      <Cursor width="9" height="13" viewBox="0 0 9 13" aria-hidden="true">
        <path d="M2 1h2l.500.500L5 1h2M2 12h2l.500-.500L5 12h2M4.500 1.500v10M3.500 7h2" stroke="#222" strokeWidth="1.300" fill="none" />
      </Cursor>
    </Desktop>
  );
}
